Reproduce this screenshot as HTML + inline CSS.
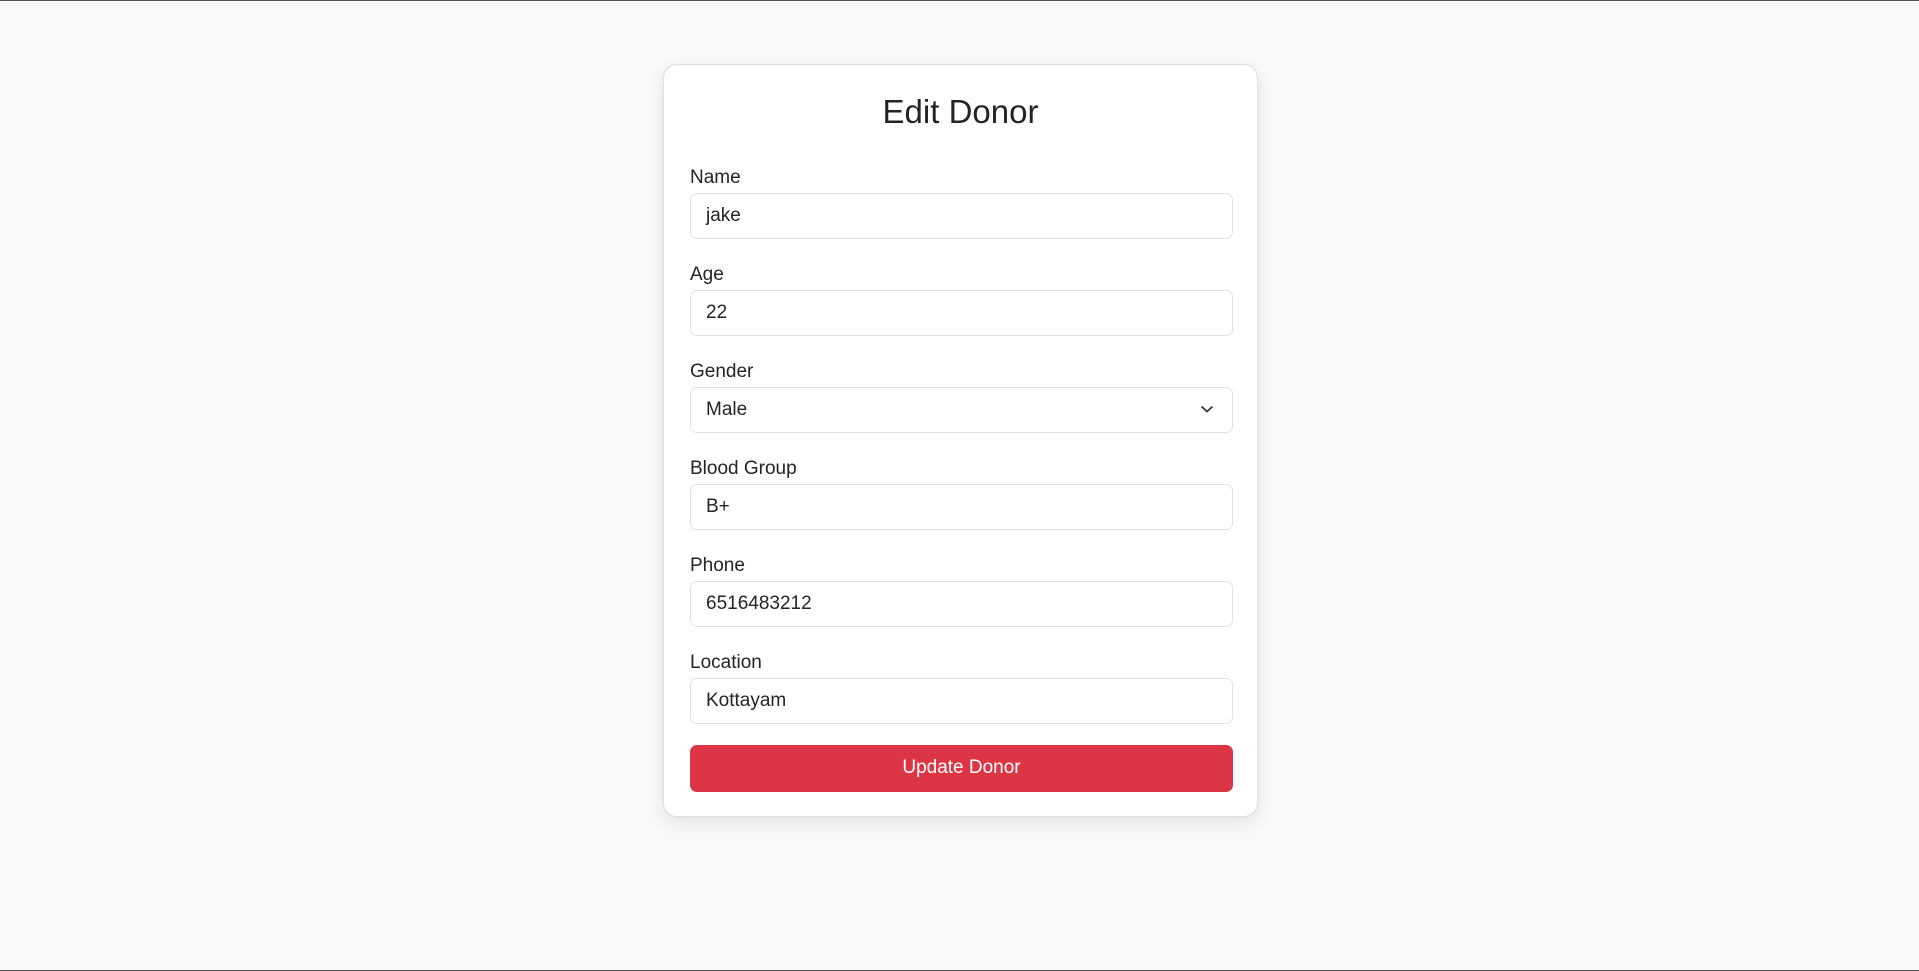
<!DOCTYPE html>
<html><head><meta charset="utf-8"><style>
*{box-sizing:border-box;margin:0;padding:0}
html,body{width:1919px;height:971px;overflow:hidden}
body{background:#f8f9fa;font-family:"Liberation Sans",Arial,sans-serif;color:#212529;border-top:1px solid #555;border-bottom:1px solid #555;position:relative}
.card{position:absolute;left:663px;top:63px;width:595px;height:753px;background:#fff;border:1px solid #dcdde0;border-radius:14px;box-shadow:0 6px 18px rgba(0,0,0,.09)}
h2{position:absolute;left:0;right:0;top:27px;text-align:center;font-weight:400;font-size:33px;line-height:40px}
.f{position:absolute;left:26px;width:543px}
.f label{display:block;font-size:19px;line-height:28px;height:28px}
.f .in{margin-top:1px;height:46px;border:1px solid #dee2e6;border-radius:7px;padding-left:15px;font-size:19px;line-height:44px;position:relative}
.chev{position:absolute;right:18px;top:16px}
.btn{position:absolute;left:26px;width:543px;top:680px;height:47px;background:#dc3545;border-radius:7px;color:#fff;font-size:19px;line-height:46px;text-align:center}
</style></head><body>
<div class="card">
<h2>Edit Donor</h2>
<div class="f" style="top:99px"><label>Name</label><div class="in">jake</div></div>
<div class="f" style="top:196px"><label>Age</label><div class="in">22</div></div>
<div class="f" style="top:293px"><label>Gender</label><div class="in">Male<svg class="chev" width="14" height="10" viewBox="0 0 14 10"><path d="M1.5 2.5 L7 7.5 L12.5 2.5" fill="none" stroke="#343a40" stroke-width="1.8"/></svg></div></div>
<div class="f" style="top:390px"><label>Blood Group</label><div class="in">B+</div></div>
<div class="f" style="top:487px"><label>Phone</label><div class="in">6516483212</div></div>
<div class="f" style="top:584px"><label>Location</label><div class="in">Kottayam</div></div>
<div class="btn">Update Donor</div>
</div>
</body></html>
